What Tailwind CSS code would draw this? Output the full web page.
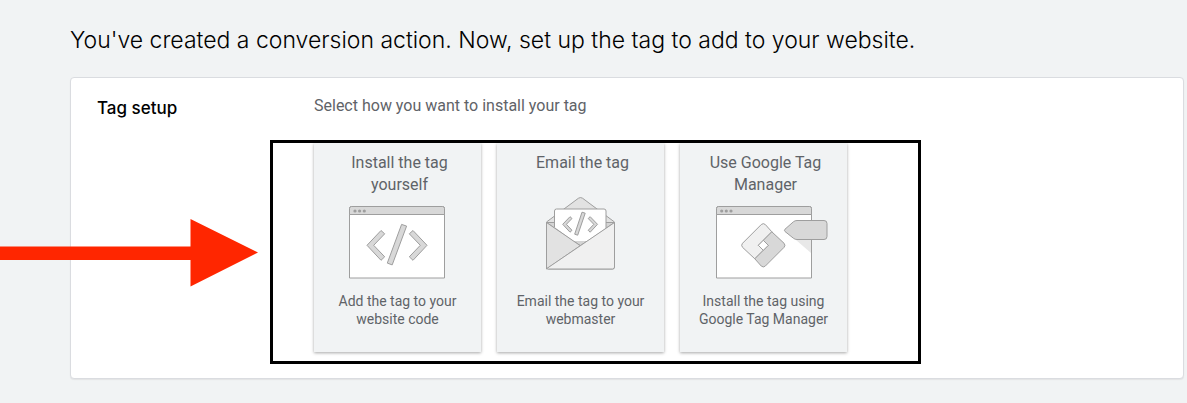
<!DOCTYPE html>
<html lang="en">
<head>
    <meta charset="UTF-8">
    <meta name="viewport" content="width=device-width, initial-scale=1.0">
    <title>Tag setup</title>
    <script src="https://cdn.jsdelivr.net/npm/@tailwindcss/browser@4"></script>
</head>
<body class="relative min-h-screen overflow-x-hidden bg-[#f1f3f4] pt-6 pr-[3px] pb-6 pl-[70px] font-['Roboto',sans-serif] text-[#5f6368]">
    <h1 class="font-['Inter',sans-serif] text-[23px] leading-8 font-light text-black">You've created a conversion action. Now, set up the tag to add to your website.</h1>

    <main class="mt-[21px] flex rounded border border-[#dadce0] bg-white pt-[18px] pr-6 pb-3.5 pl-[26px] shadow-[0_1px_1px_rgba(60,64,67,0.08)]">
        <h2 class="w-[173px] shrink-0 font-['Inter',sans-serif] text-[17px] leading-6 font-medium text-black">Tag setup</h2>

        <section class="min-w-0 flex-1">
            <p class="pl-11 text-base leading-5">Select how you want to install your tag</p>

            <div class="mt-6 flex max-w-[651px] gap-4 border-3 border-black pb-[9px] pl-[41px]">
                <button type="button" class="flex w-[167px] flex-col items-center bg-[#f1f3f4] px-4 pt-[9px] pb-6 shadow-[0_1px_3px_rgba(0,0,0,0.35)]">
                    <span class="h-11 pl-1 text-base leading-[22px] whitespace-nowrap">Install the tag<br>yourself</span>
                    <svg class="h-[83px] w-[129px] shrink-0" viewBox="0 0 129 83" fill="none" stroke="#9e9e9e" aria-hidden="true">
                        <path d="M16.5 82V12.5a2 2 0 0 1 2-2h91a2 2 0 0 1 2 2V82z" fill="#fff"/>
                        <path d="M16.5 18.5v-6a2 2 0 0 1 2-2h91a2 2 0 0 1 2 2v6z" fill="#d8d8d8"/>
                        <g fill="#9e9e9e" stroke="none"><circle cx="22" cy="15" r="1.6"/><circle cx="26.6" cy="15" r="1.6"/><circle cx="31.3" cy="15" r="1.6"/></g>
                        <g fill="#d8d8d8">
                            <path d="M34 49.3L48 34.5l3.7 3.3-11 11.5 11 11.5-3.7 3.5z"/>
                            <path d="M68.6 28.4l5 1.7-14.4 38.8-4.9-1.8z"/>
                            <path d="M94 49.3L80 34.5l-3.7 3.3 11 11.5-11 11.5 3.7 3.5z"/>
                        </g>
                    </svg>
                    <span class="mt-[13px] text-sm leading-[18px] whitespace-nowrap">Add the tag to your<br>website code</span>
                </button>

                <button type="button" class="flex w-[167px] flex-col items-center bg-[#f1f3f4] px-4 pt-[9px] pb-6 shadow-[0_1px_3px_rgba(0,0,0,0.35)]">
                    <span class="h-11 pl-1 text-base leading-[22px] whitespace-nowrap">Email the tag</span>
                    <svg class="h-[83px] w-[129px] shrink-0" viewBox="0 0 129 83" fill="none" stroke="#9e9e9e" stroke-linejoin="round" aria-hidden="true">
                        <path d="M30.5 26L62.5 2.2q2-1.3 4 0L98.5 26v45a2 2 0 0 1-2 2h-64a2 2 0 0 1-2-2z" fill="#e2e2e2"/>
                        <path d="M30.5 26.5h68L64.3 49.7z" fill="#d4d4d4"/>
                        <path d="M38.5 31V15a2 2 0 0 1 2-2H88a2 2 0 0 1 2 2v17L71 45H57.5z" fill="#fff" stroke="none"/>
                        <path d="M38.5 31V15a2 2 0 0 1 2-2H88a2 2 0 0 1 2 2v17"/>
                        <g fill="#d8d8d8">
                            <path d="M46.7 28.3l7.3-7.6 2 1.8-5.6 5.8 5.6 6-2 1.9z"/>
                            <path d="M66 16.2l3.2 1-7.5 22-3-1z"/>
                            <path d="M81.5 28.3l-7.3-7.6-2 1.8 5.6 5.8-5.6 6 2 1.9z"/>
                        </g>
                        <path d="M30.5 26.5L64.3 49.7 30.5 73z" fill="#e2e2e2"/>
                        <path d="M98.5 26.5L30.8 72.5q.7.5 1.7.5h64a2 2 0 0 0 2-2z" fill="#f0f0f0"/>
                    </svg>
                    <span class="mt-[13px] text-sm leading-[18px] whitespace-nowrap">Email the tag to your<br>webmaster</span>
                </button>

                <button type="button" class="flex w-[167px] flex-col items-center bg-[#f1f3f4] px-4 pt-[9px] pb-6 shadow-[0_1px_3px_rgba(0,0,0,0.35)]">
                    <span class="h-11 pl-1 text-base leading-[22px] whitespace-nowrap">Use Google Tag<br>Manager</span>
                    <svg class="h-[83px] w-[129px] shrink-0" viewBox="0 0 129 83" fill="none" stroke="#9e9e9e" stroke-linejoin="round" aria-hidden="true">
                        <path d="M17.5 82V12.5a2 2 0 0 1 2-2h91a2 2 0 0 1 2 2V82z" fill="#fff"/>
                        <path d="M17.5 18.5v-6a2 2 0 0 1 2-2h91a2 2 0 0 1 2 2v6z" fill="#d8d8d8"/>
                        <g fill="#9e9e9e" stroke="none"><circle cx="22.7" cy="15" r="1.6"/><circle cx="27.3" cy="15" r="1.6"/><circle cx="32" cy="15" r="1.6"/></g>
                        <path d="M62.3 28.5q2-1.7 4 0L72.8 35.8 59.3 49.3l5 5-8.5 8.5L43.5 51.3q-1.7-2 0-4z" fill="#f0f0f0"/>
                        <path d="M72.8 35.8L85.1 47.3q1.7 2 0 4L66.3 70.1q-2 1.7-4 0L55.8 62.8 69.3 49.3l-5-5z" fill="#d8d8d8"/>
                        <path d="M64.3 44.3l5 5-5 5-5-5z" fill="#fff"/>
                        <path d="M97 44l15 13V44z" fill="#e8e8e8" stroke="none"/>
                        <path d="M86 33.2l8.5-7.5q1.5-1.2 3.5-1.2h27a3 3 0 0 1 3 3v13a3 3 0 0 1-3 3H98q-2 0-3.5-1.2L86 35.5q-1.2-1.2 0-2.3z" fill="#d8d8d8"/>
                    </svg>
                    <span class="mt-[13px] text-sm leading-[18px] whitespace-nowrap">Install the tag using<br>Google Tag Manager</span>
                </button>
            </div>
        </section>
    </main>

    <!-- Arrow pointing at the install options -->
    <svg class="pointer-events-none absolute top-[219px] left-0 h-[68px] w-[258px]" viewBox="0 0 258 68" fill="#ff2600" aria-hidden="true">
        <path d="M0 27.5h190.5V0L258 33.5 190.5 67.5V41H0z"/>
    </svg>
</body>
</html>
